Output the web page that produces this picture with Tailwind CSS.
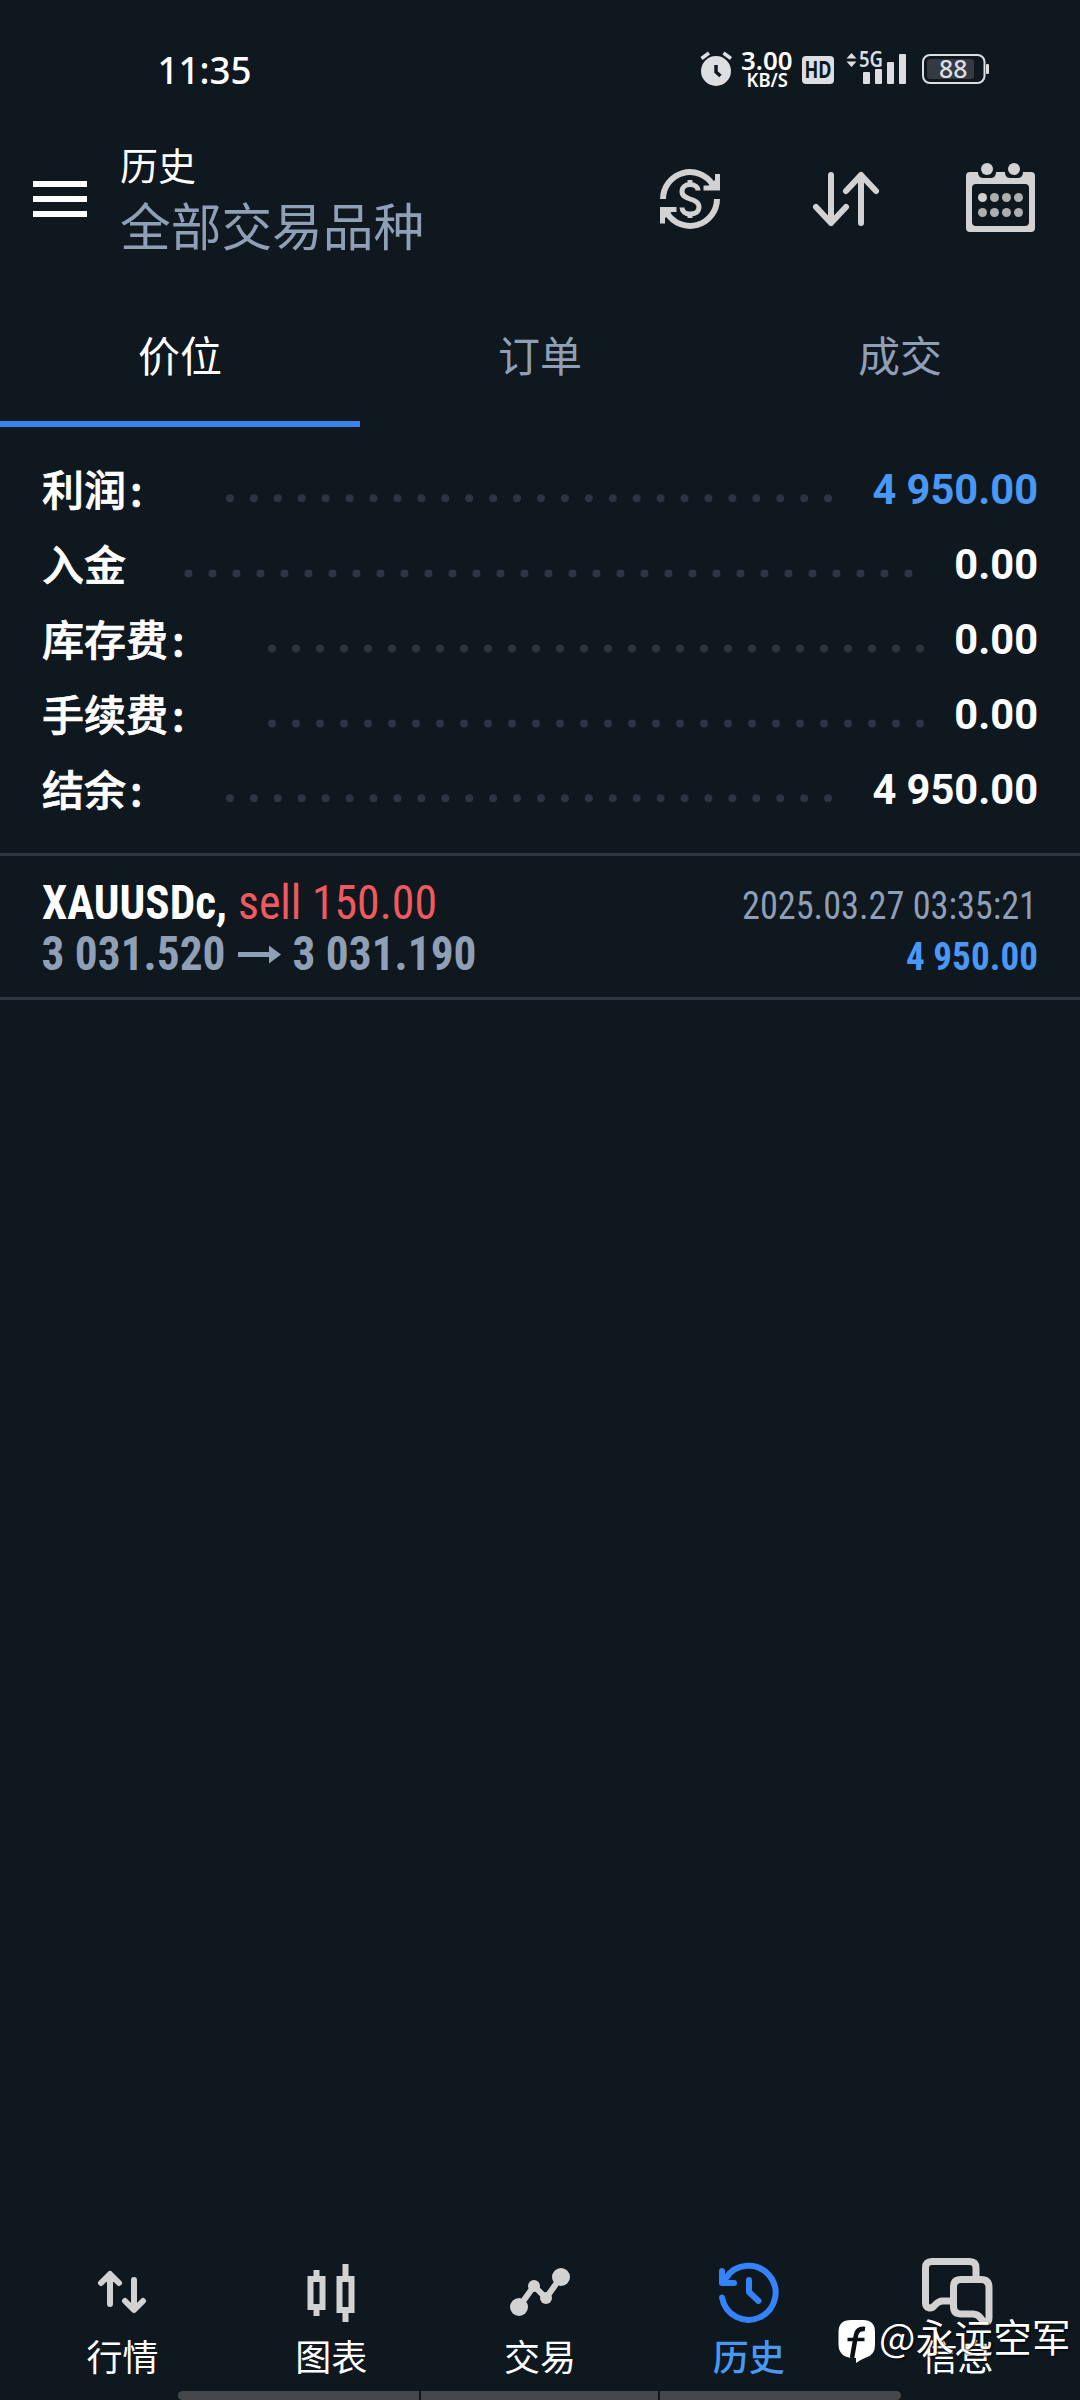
<!DOCTYPE html>
<html lang="zh-CN">
<head>
<meta charset="utf-8">
<title>历史</title>
<script src="https://cdn.jsdelivr.net/npm/@tailwindcss/browser@4"></script>
</head>
<body class="bg-[#0f171f]">
<div class="relative flex h-[2400px] w-[1080px] flex-col overflow-hidden bg-[#0f171f] font-['Noto_Sans_CJK_SC',sans-serif] text-white">

  <!-- status bar -->
  <div class="flex h-[100px] items-start justify-between pt-[36px] pr-[88px] pl-[152px]">
    <svg class="h-[60px] w-[104px]" viewBox="152 36 104 60"><text x="157.500" y="83.500" textLength="94" lengthAdjust="spacingAndGlyphs" font-family="Noto Sans" font-weight="500" font-size="38" fill="#fff">11:35</text></svg>
    <svg class="h-[60px] w-[296px]" viewBox="696 36 296 60" fill="#dcdee1">
      <circle cx="716" cy="71" r="15"/>
      <path d="M701.5 58.5l7.5-5.5M723.5 53l7.500 5.500" stroke="#dcdee1" stroke-width="3.500"/>
      <path d="M716 65v7l4.500 4" fill="none" stroke="#0f171f" stroke-width="3.500"/>
      <text x="741" y="70" textLength="51.500" lengthAdjust="spacingAndGlyphs" font-family="Noto Sans" font-weight="600" font-size="25" fill="#fff">3.00</text>
      <text x="746.500" y="86.500" textLength="41.500" lengthAdjust="spacingAndGlyphs" font-family="Noto Sans" font-weight="600" font-size="19" fill="#fff">KB/S</text>
      <rect x="802" y="56" width="32" height="28" rx="4"/>
      <text x="804.500" y="78" textLength="27" lengthAdjust="spacingAndGlyphs" font-family="Noto Sans" font-weight="700" font-size="23" fill="#0f171f">HD</text>
      <path d="M846.500 58.500l5-5.500 5 5.500zM846.500 61.500h10l-5 5.500z"/>
      <text x="859" y="67" textLength="24" lengthAdjust="spacingAndGlyphs" font-family="Noto Sans" font-weight="600" font-size="21">5G</text>
      <rect x="863" y="72" width="7" height="12" rx="1"/><rect x="875" y="69" width="7" height="15" rx="1"/><rect x="887" y="62" width="7" height="22" rx="1"/><rect x="899" y="54" width="7" height="30" rx="1"/>
      <rect x="923" y="55" width="61.500" height="28" rx="7" fill="none" stroke="#dcdee1" stroke-width="2"/>
      <rect x="927" y="59" width="47" height="20" rx="3" fill="#343a41"/>
      <rect x="986" y="64" width="3" height="10" rx="1"/>
      <text x="939" y="78" textLength="28.500" lengthAdjust="spacingAndGlyphs" font-family="Noto Sans" font-weight="500" font-size="24.500">88</text>
    </svg>
  </div>

  <!-- app bar -->
  <header class="flex h-[192px] items-start pr-[42px] pl-[33px]">
    <div class="mt-[81px] flex w-[54px] flex-col gap-[9px]"><i class="h-[6px] bg-white"></i><i class="h-[6px] bg-white"></i><i class="h-[6px] bg-white"></i></div>
    <div class="mt-[36px] ml-[33px] flex-1">
      <div class="text-[38px] leading-[56px]">历史</div>
      <div class="text-[50.700px] leading-[64px] text-[#8f9fb6]">全部交易品种</div>
    </div>
    <svg class="h-[80px] w-[388px] mt-[60px]" viewBox="650 160 388 80" fill="none" stroke="#d2d2d2" stroke-width="6">
      <path d="M663 199a27 27 0 0 1 50-14"/>
      <path d="M717 199a27 27 0 0 1-50 14"/>
      <path d="M717.500 174v14h-14M662.500 223.500v-14h14" stroke-width="5"/>
      <path d="M706.500 188h11v-10.500zM673.500 210h-11v10.500z" fill="#d2d2d2" stroke="none"/>
      <path d="M698 190.500c0-3.500-3.500-6-8-6s-8 2.500-8 7 3.500 6 8 7.500 9 3 9 8-4 7-9 7-8-3-8-6.500M690 180v5M690 213v5" stroke-width="5"/>
      <g stroke-linecap="round" stroke-linejoin="round"><path d="M831 175v48M816 207l15 16 15-16M861 223v-48M846 191l15-16 15 16"/></g>
      <g stroke="none" fill="#d2d2d2">
        <path fill-rule="evenodd" d="M970 172h8c0 5 3 6 6 6h6c3 0 6-1 6-6h9c0 5 3 6 6 6h6c3 0 6-1 6-6h8a4 4 0 0 1 4 4v52a4 4 0 0 1-4 4h-61a4 4 0 0 1-4-4v-52a4 4 0 0 1 4-4zM976 184a4 4 0 0 0-4 4v34a4 4 0 0 0 4 4h49a4 4 0 0 0 4-4v-34a4 4 0 0 0-4-4z"/>
        <circle cx="987" cy="169" r="6"/><circle cx="1014" cy="169" r="6"/>
        <circle cx="982.500" cy="197.500" r="4.500"/>
        <g fill="#adaeb0"><circle cx="994.500" cy="197.500" r="4.500"/><circle cx="1006.500" cy="197.500" r="4.500"/><circle cx="1018.500" cy="197.500" r="4.500"/><circle cx="982.500" cy="212.500" r="4.500"/><circle cx="994.500" cy="212.500" r="4.500"/><circle cx="1006.500" cy="212.500" r="4.500"/><circle cx="1018.500" cy="212.500" r="4.500"/></g>
      </g>
    </svg>
  </header>

  <!-- tabs -->
  <nav class="grid h-[135px] grid-cols-3 text-center text-[42px] leading-[124px] text-[#8f9fb6]">
    <div class="border-b-[6px] border-[#3b82ef] text-white">价位</div>
    <div>订单</div>
    <div>成交</div>
  </nav>

  <!-- totals -->
  <section class="flex h-[426px] flex-col pt-[24px] pr-[42px] pl-[42px] text-[42px] leading-[75px] font-medium">
    <div class="flex h-[75px]"><span class="w-[176px] leading-[73px] [-webkit-text-stroke:0.7px_white]">利润<span class="ml-[4px]">:</span></span><svg class="h-[75px] flex-1" viewBox="218 0 642 75" preserveAspectRatio="xMinYMin"><path d="M230 47.500h601" stroke="#2c3643" stroke-width="8" stroke-linecap="round" stroke-dasharray="0 24"/></svg><b class="w-[180px] text-right font-[Roboto,sans-serif] text-[41.600px] leading-[78px] text-[#4a98f5]">4 950.00</b></div>
    <div class="flex h-[75px]"><span class="w-[134px] leading-[73px] [-webkit-text-stroke:0.7px_white]">入金</span><svg class="h-[75px] flex-1" viewBox="176 0 756 75" preserveAspectRatio="xMinYMin"><path d="M188.500 47.500h721" stroke="#2c3643" stroke-width="8" stroke-linecap="round" stroke-dasharray="0 24"/></svg><b class="w-[106px] text-right font-[Roboto,sans-serif] text-[41.600px] leading-[78px]">0.00</b></div>
    <div class="flex h-[75px]"><span class="w-[218px] leading-[73px] [-webkit-text-stroke:0.7px_white]">库存费<span class="ml-[4px]">:</span></span><svg class="h-[75px] flex-1" viewBox="260 0 672 75" preserveAspectRatio="xMinYMin"><path d="M272 47.500h649" stroke="#2c3643" stroke-width="8" stroke-linecap="round" stroke-dasharray="0 24"/></svg><b class="w-[106px] text-right font-[Roboto,sans-serif] text-[41.600px] leading-[78px]">0.00</b></div>
    <div class="flex h-[75px]"><span class="w-[218px] leading-[73px] [-webkit-text-stroke:0.7px_white]">手续费<span class="ml-[4px]">:</span></span><svg class="h-[75px] flex-1" viewBox="260 0 672 75" preserveAspectRatio="xMinYMin"><path d="M272 47.500h649" stroke="#2c3643" stroke-width="8" stroke-linecap="round" stroke-dasharray="0 24"/></svg><b class="w-[106px] text-right font-[Roboto,sans-serif] text-[41.600px] leading-[78px]">0.00</b></div>
    <div class="flex h-[75px]"><span class="w-[176px] leading-[73px] [-webkit-text-stroke:0.7px_white]">结余<span class="ml-[4px]">:</span></span><svg class="h-[75px] flex-1" viewBox="218 0 642 75" preserveAspectRatio="xMinYMin"><path d="M230 47.500h601" stroke="#2c3643" stroke-width="8" stroke-linecap="round" stroke-dasharray="0 24"/></svg><b class="w-[180px] text-right font-[Roboto,sans-serif] text-[41.600px] leading-[78px]">4 950.00</b></div>
  </section>

  <!-- closed position -->
  <section class="flex h-[147px] justify-between border-y-[3px] border-[#2c3643] pr-[38px] pl-[38px]">
    <svg class="h-[141px] w-[448px]" viewBox="38 856 448 141" font-family="Roboto Condensed, Roboto" font-size="48">
      <text x="42" y="919" textLength="185" lengthAdjust="spacingAndGlyphs" font-weight="700" fill="#fff">XAUUSDc,</text>
      <text x="238" y="919" textLength="199" lengthAdjust="spacingAndGlyphs" fill="#f05a5e">sell 150.00</text>
      <g font-weight="700" fill="#8f9fb6"><text x="41.500" y="970" textLength="184" lengthAdjust="spacingAndGlyphs">3 031.520</text><text x="292.500" y="970" textLength="184" lengthAdjust="spacingAndGlyphs">3 031.190</text></g>
      <path d="M238 952h31v-6.500l12 9-12 9v-6.500h-31z" fill="#8f9fb6"/>
    </svg>
    <svg class="h-[141px] w-[308px]" viewBox="734 856 308 141" font-family="Roboto Condensed, Roboto" font-size="39">
      <text x="742" y="919" textLength="295" lengthAdjust="spacingAndGlyphs" fill="#8f9fb6">2025.03.27 03:35:21</text>
      <text x="906" y="970" textLength="132" lengthAdjust="spacingAndGlyphs" font-weight="700" fill="#4a98f5">4 950.00</text>
    </svg>
  </section>

  <main class="flex-1"></main>

  <!-- bottom navigation -->
  <nav class="grid h-[151px] grid-cols-5 px-[18px] text-center text-[36px] leading-[50px]">
    <div class="flex flex-col items-center"><svg class="h-[90px] w-[90px]" viewBox="77 2240 90 90" fill="none" stroke="#d2d2d2" stroke-width="6" stroke-linecap="round" stroke-linejoin="round"><path d="M110 2304v-29M101 2283l9-9 9 9M134 2280v29M125 2301l9 9 9-9"/></svg>行情</div>
    <div class="flex flex-col items-center"><svg class="h-[90px] w-[90px]" viewBox="286 2240 90 90" fill="none" stroke="#d2d2d2" stroke-width="6"><path d="M310.500 2279h12v28h-12zM316.500 2270v6M316.500 2310v6M339.500 2279h12v31h-12zM345.500 2264v12M345.500 2313v9"/></svg>图表</div>
    <div class="flex flex-col items-center"><svg class="h-[90px] w-[90px]" viewBox="495 2240 90 90" fill="#d2d2d2"><path d="M519 2307l15-21 12 12 15-21" fill="none" stroke="#d2d2d2" stroke-width="6"/><circle cx="519" cy="2307" r="9"/><circle cx="534" cy="2286" r="6"/><circle cx="546" cy="2298" r="6"/><circle cx="561" cy="2277" r="9"/></svg>交易</div>
    <div class="flex flex-col items-center font-medium text-[#4a98f5]"><svg class="h-[90px] w-[90px]" viewBox="704 2240 90 90" fill="none" stroke="#3483fa" stroke-width="6" stroke-linecap="round" stroke-linejoin="round"><path d="M722 2297.500a27 27 0 1 0 4-19.500l-4 5M722 2271v12h12M749 2280v12l9.500 9"/></svg>历史</div>
    <div class="flex flex-col items-center"><svg class="h-[90px] w-[90px]" viewBox="913 2240 90 90" fill="none" stroke="#d2d2d2" stroke-width="7" stroke-linejoin="round"><path d="M976 2276v-8q0-6.500-6.500-6.500h-37.500q-6.500 0-6.500 6.500v35q0 4 3.500 5 3 .5 5.500-2.500 4-4.500 8-4.500h10"/><path d="M961 2279.500h20q8 0 8 8v30.500q0 4-3 4-3 0-5-3.500-3-4.500-8-4.500h-12q-7.500 0-7.500-7.500v-19.500q0-7.500 7.500-7.500z"/></svg>信息</div>
  </nav>

  <!-- gesture bar -->
  <div class="ml-[178px] flex h-[9px] w-[723px] gap-[2px]"><i class="w-[241px] rounded-l-[5px] bg-[#44484b]"></i><i class="w-[237px] bg-[#44484b]"></i><i class="flex-1 rounded-r-[5px] bg-[#44484b]"></i></div>

  <!-- author watermark, laid over the navigation -->
  <div class="absolute top-[2308px] left-[838px] flex items-start">
    <svg class="mt-[11px] h-[46px] w-[40px]" viewBox="838 2319 40 46"><path d="M851 2320h12q12 0 12 12v13q0 10-9 12.500-4 1.500-10 5.500v-5h-4q-13-1-13.500-13v-13q0-12 12.500-12z" fill="#fff"/><path d="M865 2329q-7.500-1-9 6l-4 23" fill="none" stroke="#0b0f14" stroke-width="4.500"/><path d="M847.500 2339.500h17" stroke="#0b0f14" stroke-width="3.500"/></svg>
    <span class="ml-[1px] text-[38.500px] leading-[54px] tracking-[0.3px] whitespace-nowrap [text-shadow:1px_1px_2px_#000]">@永远空军</span>
  </div>
</div>
</body>
</html>
